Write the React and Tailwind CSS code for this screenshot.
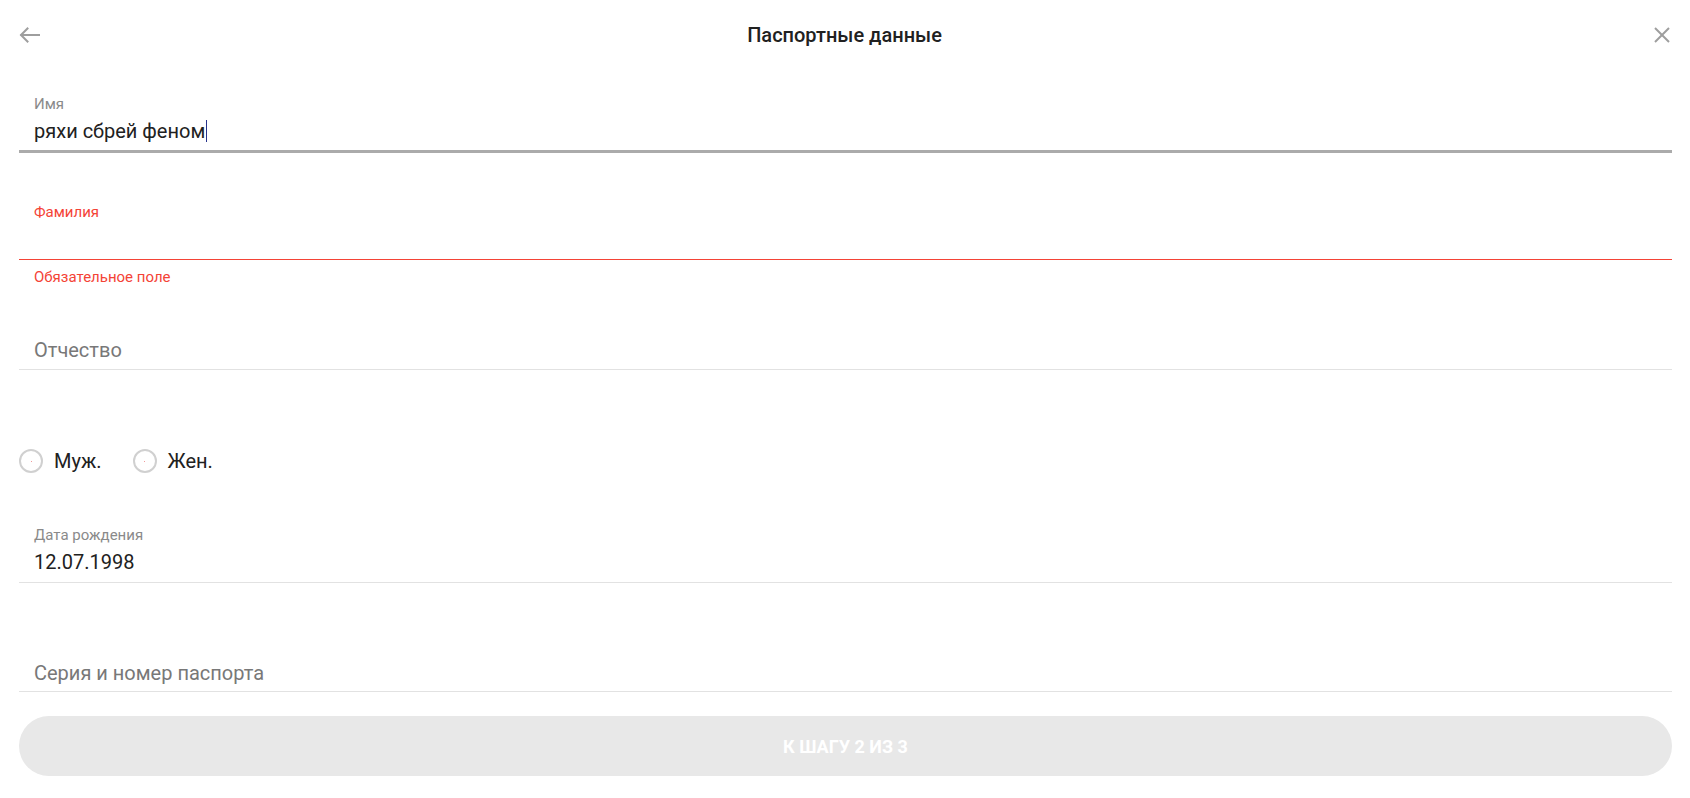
import React from "react";

const FONT = { fontFamily: "Roboto, 'Noto Sans', Arial, sans-serif" };

function Label({ children, red }) {
  return (
    <div className={`h-4 leading-4 text-[15px] ${red ? "text-[#f44336]" : "text-[#8a8a8a]"}`}>
      {children}
    </div>
  );
}

function Radio({ label }) {
  return (
    <label className="flex items-center gap-[11px]">
      <span className="relative flex h-6 w-6 items-center justify-center rounded-full border-2 border-[#d0d0d0] bg-white">
        <span className="h-px w-px bg-[#f19a9a]" />
      </span>
      <span className="text-[20px] leading-6 text-[#212121]">{label}</span>
    </label>
  );
}

export default function App() {
  return (
    <div className="h-[798px] w-full overflow-hidden bg-white" style={FONT}>
      {/* Header */}
      <div className="grid h-[70px] grid-cols-[1fr_auto_1fr] items-center pl-[19px] pr-[20px]">
        <div className="flex items-center">
          <svg width="21" height="16" viewBox="0 0 21 16" fill="none" stroke="#9e9e9e" strokeWidth="2" strokeLinecap="square">
            <path d="M20 8H2.5" />
            <path d="M8.5 1.5L2 8l6.5 6.5" />
          </svg>
        </div>
        <div className="text-[20px] font-medium leading-6 text-[#212121]">Паспортные данные</div>
        <div className="flex items-center justify-end">
          <svg width="16" height="16" viewBox="0 0 16 16" fill="none" stroke="#9e9e9e" strokeWidth="2">
            <path d="M1 1L15 15" />
            <path d="M15 1L1 15" />
          </svg>
        </div>
      </div>

      <div className="pl-[19px] pr-[18px]">
        {/* Имя */}
        <div className="border-b-[3px] border-[#ababab] pb-[7px] pl-[15px] pt-[26px]">
          <Label>Имя</Label>
          <div className="mt-[7px] flex h-6 items-center text-[20px] leading-6 text-[#212121]">
            <span>ряхи сбрей феном</span>
            <span className="ml-px h-[22px] w-px bg-[#27338c]" />
          </div>
        </div>

        {/* Фамилия */}
        <div className="mt-[51px] border-b border-[#f44336] pb-[8px] pl-[15px]">
          <Label red>Фамилия</Label>
          <div className="mt-[7px] h-6" />
        </div>
        <div className="mt-[9px] h-4 pl-[15px] text-[15px] leading-4 text-[#f44336]">Обязательное поле</div>

        {/* Отчество */}
        <div className="mt-[53px] border-b border-[#e2e2e2] pb-[7px] pl-[15px]">
          <div className="h-6 text-[20px] leading-6 text-[#787878]">Отчество</div>
        </div>

        {/* Пол */}
        <div className="mt-[79px] flex h-6 items-center gap-[31px]">
          <Radio label="Муж." />
          <Radio label="Жен." />
        </div>

        {/* Дата рождения */}
        <div className="mt-[54px] border-b border-[#e2e2e2] pb-[8px] pl-[15px]">
          <Label>Дата рождения</Label>
          <div className="mt-[7px] h-6 text-[20px] leading-6 text-[#212121]">12.07.1998</div>
        </div>

        {/* Паспорт */}
        <div className="mt-[78px] border-b border-[#e2e2e2] pb-[6px] pl-[15px]">
          <div className="h-6 text-[20px] leading-6 text-[#787878]">Серия и номер паспорта</div>
        </div>

        {/* Button */}
        <button className="mt-[24px] flex h-[60px] w-full items-center justify-center rounded-full bg-[#e8e8e8] text-[18px] font-bold uppercase text-white">
          К шагу 2 из 3
        </button>
      </div>
    </div>
  );
}
